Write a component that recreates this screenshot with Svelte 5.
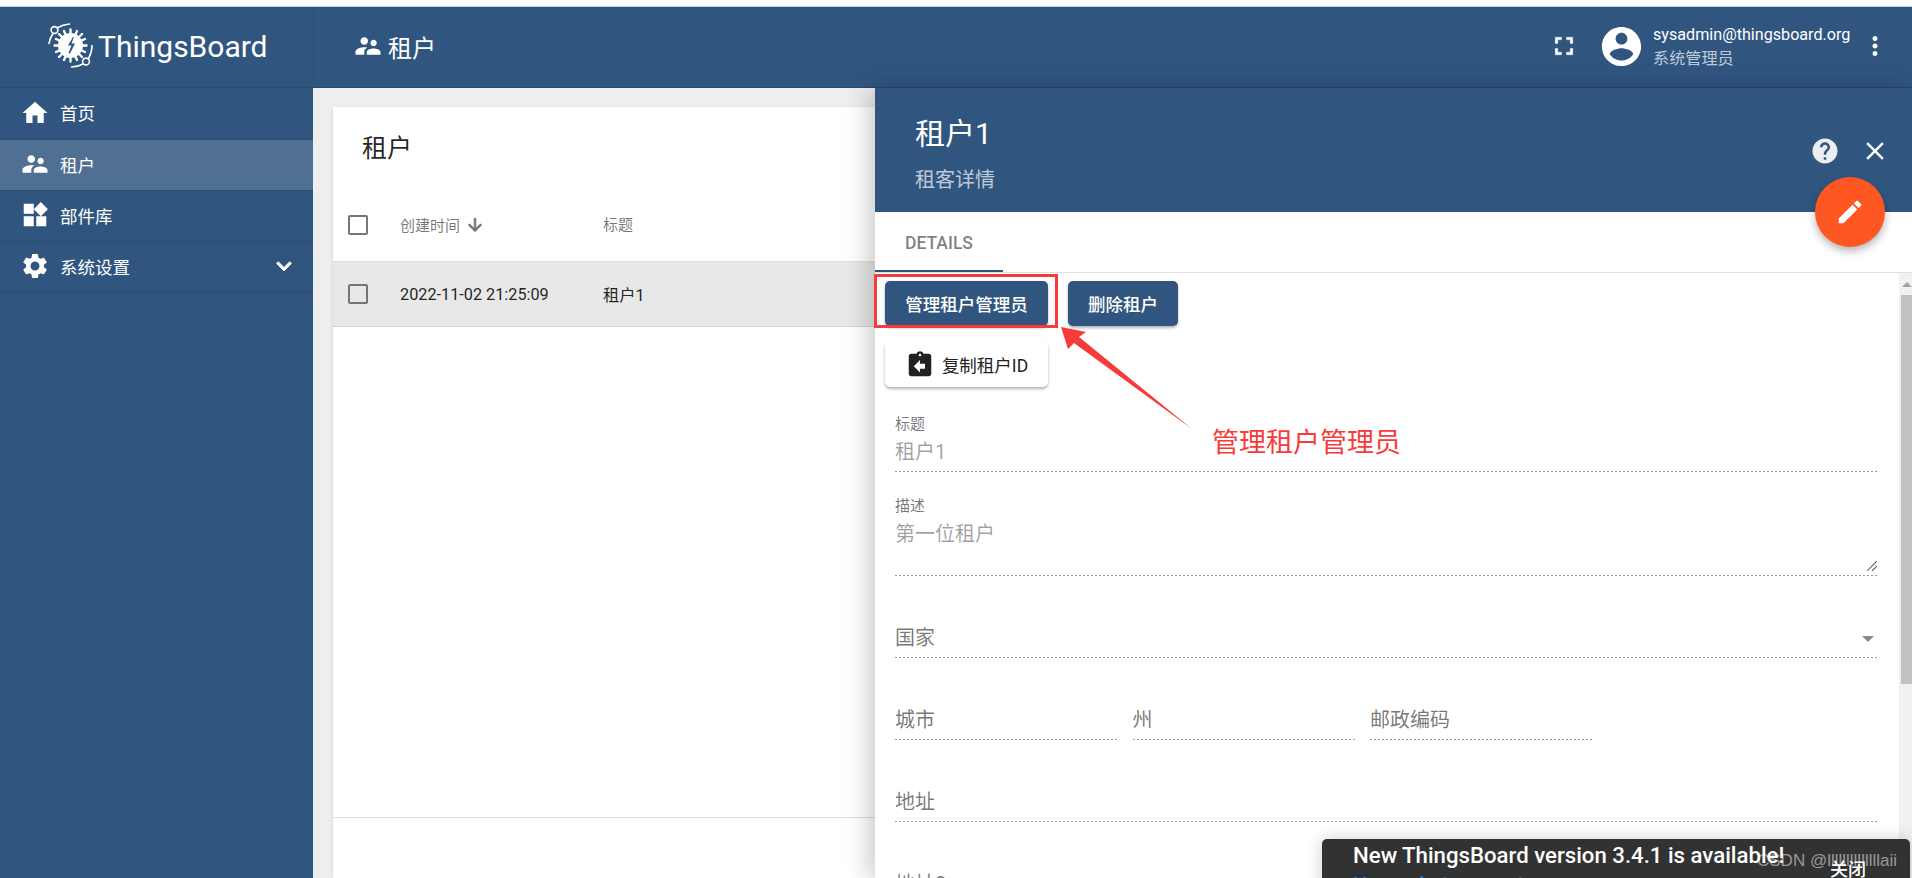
<script>
  const icons = {
    home: "M10 20v-6h4v6h5v-8h3L12 3 2 12h3v8z",
    people: "M16.5 12c1.38 0 2.49-1.12 2.49-2.5S17.88 7 16.5 7C15.12 7 14 8.12 14 9.5s1.12 2.5 2.5 2.5zM9 11c1.66 0 2.99-1.34 2.99-3S10.66 5 9 5C7.34 5 6 6.34 6 8s1.34 3 3 3zm7.5 3c-1.83 0-5.5.92-5.5 2.75V19h11v-2.25c0-1.83-3.67-2.75-5.5-2.75zM9 13c-2.33 0-7 1.17-7 3.5V19h7v-2.25c0-.85.33-2.34 2.37-3.47C10.5 13.1 9.66 13 9 13z",
    widgets: "M13 13v8h8v-8h-8zM3 21h8v-8H3v8zM3 3v8h8V3H3zm13.66-1.31L11 7.34 16.66 13l5.66-5.66-5.66-5.65z",
    settings: "M19.14 12.94c.04-.3.06-.61.06-.94 0-.32-.02-.64-.07-.94l2.03-1.58c.18-.14.23-.41.12-.61l-1.92-3.32c-.12-.22-.37-.29-.59-.22l-2.39.96c-.5-.38-1.03-.7-1.62-.94L14.4 2.81c-.04-.24-.24-.41-.48-.41h-3.84c-.24 0-.43.17-.47.41L9.25 5.35c-.59.24-1.13.57-1.62.94l-2.39-.96c-.22-.08-.47 0-.59.22L2.74 8.87c-.12.21-.08.47.12.61l2.03 1.58c-.05.3-.09.63-.09.94s.02.64.07.94l-2.03 1.58c-.18.14-.23.41-.12.61l1.92 3.32c.12.22.37.29.59.22l2.39-.96c.5.38 1.03.7 1.62.94l.36 2.54c.05.24.24.41.48.41h3.84c.24 0 .44-.17.47-.41l.36-2.54c.59-.24 1.13-.56 1.62-.94l2.39.96c.22.08.47 0 .59-.22l1.92-3.32c.12-.22.07-.47-.12-.61l-2.01-1.58zM12 15.6c-1.98 0-3.6-1.62-3.6-3.6s1.62-3.6 3.6-3.6 3.6 1.62 3.6 3.6-1.62 3.6-3.6 3.6z",
    chevron: "M16.59 8.59L12 13.17 7.41 8.59 6 10l6 6 6-6z",
    fullscreen: "M7 14H5v5h5v-2H7v-3zm-2-4h2V7h3V5H5v5zm12 7h-3v2h5v-5h-2v3zM14 5v2h3v3h2V5h-5z",
    account: "M12 2C6.48 2 2 6.48 2 12s4.48 10 10 10 10-4.48 10-10S17.52 2 12 2zm0 3c1.66 0 3 1.34 3 3s-1.34 3-3 3-3-1.34-3-3 1.34-3 3-3zm0 14.2c-2.5 0-4.71-1.28-6-3.22.03-1.99 4-3.08 6-3.08 1.99 0 5.97 1.09 6 3.08-1.29 1.94-3.5 3.22-6 3.22z",
    more: "M12 8c1.1 0 2-.9 2-2s-.9-2-2-2-2 .9-2 2 .9 2 2 2zm0 2c-1.1 0-2 .9-2 2s.9 2 2 2 2-.9 2-2-.9-2-2-2zm0 6c-1.1 0-2 .9-2 2s.9 2 2 2 2-.9 2-2-.9-2-2-2z",
    help: "M12 2C6.48 2 2 6.48 2 12s4.48 10 10 10 10-4.48 10-10S17.52 2 12 2zm1 17h-2v-2h2v2zm2.07-7.75l-.9.92C13.45 12.9 13 13.5 13 15h-2v-.5c0-1.1.45-2.1 1.17-2.83l1.24-1.26c.37-.36.59-.86.59-1.41 0-1.1-.9-2-2-2s-2 .9-2 2H8c0-2.21 1.79-4 4-4s4 1.79 4 4c0 .88-.36 1.68-.93 2.25z",
    close: "M19 6.41L17.59 5 12 10.59 6.41 5 5 6.41 10.59 12 5 17.59 6.41 19 12 13.41 17.59 19 19 17.59 13.41 12z",
    edit: "M3 17.25V21h3.75L17.81 9.94l-3.75-3.75L3 17.25zM20.71 7.04c.39-.39.39-1.02 0-1.41l-2.34-2.34c-.39-.39-1.02-.39-1.41 0l-1.83 1.83 3.75 3.75 1.83-1.83z",
    down: "M20 12l-1.41-1.41L13 16.17V4h-2v12.17l-5.58-5.59L4 12l8 8 8-8z",
    copy: "M19 3h-4.18C14.4 1.84 13.3 1 12 1c-1.3 0-2.4.84-2.82 2H5c-1.1 0-2 .9-2 2v14c0 1.1.9 2 2 2h14c1.1 0 2-.9 2-2V5c0-1.1-.9-2-2-2zm-7 0c.55 0 1 .45 1 1s-.45 1-1 1-1-.45-1-1 .45-1 1-1zm4 12h-4v3l-5-5 5-5v3h4v4z"
  };

  const menu = [
    { label: "首页", icon: "home" },
    { label: "租户", icon: "people", active: true },
    { label: "部件库", icon: "widgets" },
    { label: "系统设置", icon: "settings", more: true }
  ];
</script>

<div class="page">
  <div class="strip"></div>
  <div class="shell">
    <aside class="sidebar">
      <div class="logo">
        <svg class="logo-mark" viewBox="0 0 46 46" width="46" height="46">
          <g fill="none" stroke="#fff" stroke-width="1.6" stroke-linecap="round">
            <circle cx="6.5" cy="7" r="3.4" />
            <path d="M9.5 4.8C13 2.6 17 1.4 21.5 1" />
            <path d="M5 10.5C2.8 13.5 1.6 16.5 1 20.5" />
            <circle cx="38" cy="38.5" r="3.4" />
            <path d="M40.5 35.5C43 31 44 27 44 22.5" />
            <path d="M35 41C31.5 43 28 44 23.5 44" />
          </g>
          <g stroke="#fff" stroke-width="2.4" stroke-linecap="round">
            <path d="M22.5 6.5v32M6.500 22.5h32M11 11l23 23M34 11L11 34M16 8l13 29M29 8L16 37M8 16l29 13M8 29l29-13" />
          </g>
          <circle cx="22.5" cy="22.5" r="12.5" fill="#fff" />
          <path d="M25 14L20 22.500h3.500l-3 7.500 1.500.5 5-10h-3.500l2.500-6.500z" fill="#305680" />
        </svg>
        <span class="logo-text">ThingsBoard</span>
      </div>
      <nav>
        {#each menu as item}
          <div class="menu-item" class:active={item.active}>
            <svg class="icon" viewBox="0 0 24 24"><path d={icons[item.icon]} /></svg>
            <span>{item.label}</span>
            {#if item.more}
              <svg class="icon chevron" viewBox="0 0 24 24"><path d={icons.chevron} /></svg>
            {/if}
          </div>
        {/each}
      </nav>
    </aside>

    <div class="main">
      <header class="toolbar">
        <svg class="icon" viewBox="0 0 24 24"><path d={icons.people} /></svg>
        <span class="toolbar-title">租户</span>
        <div class="toolbar-right">
          <svg class="icon fullscreen" viewBox="0 0 24 24"><path d={icons.fullscreen} /></svg>
          <svg class="avatar" viewBox="0 0 24 24"><path d={icons.account} /></svg>
          <div class="user">
            <div class="email">sysadmin@thingsboard.org</div>
            <div class="role">系统管理员</div>
          </div>
          <svg class="icon" viewBox="0 0 24 24"><path d={icons.more} /></svg>
        </div>
      </header>

      <div class="content">
        <section class="card">
          <h2 class="card-title">租户</h2>
          <div class="row head">
            <span class="check"></span>
            <span class="sort">创建时间
              <svg viewBox="0 0 24 24"><path d={icons.down} /></svg>
            </span>
            <span class="head-label">标题</span>
          </div>
          <div class="row selected">
            <span class="check"></span>
            <span>2022-11-02 21:25:09</span>
            <span>租户1</span>
          </div>
          <div class="spacer"></div>
          <div class="card-footer"></div>
        </section>

        <section class="panel">
          <header class="panel-head">
            <div class="panel-titles">
              <h1>租户1</h1>
              <p>租客详情</p>
            </div>
            <div class="panel-actions">
              <svg class="icon help" viewBox="0 0 24 24"><path d={icons.help} /></svg>
              <svg class="icon" viewBox="0 0 24 24"><path d={icons.close} /></svg>
            </div>
          </header>
          <button class="fab" aria-label="edit">
            <svg viewBox="0 0 24 24"><path d={icons.edit} /></svg>
          </button>
          <div class="tabs">
            <div class="tab">DETAILS</div>
          </div>
          <div class="panel-body">
            <div class="form">
              <div class="actions">
                <button class="btn primary wide">管理租户管理员</button>
                <button class="btn primary">删除租户</button>
                <button class="btn plain wide">
                  <svg viewBox="0 0 24 24"><path d={icons.copy} /></svg>
                  复制租户ID
                </button>
              </div>

              <div class="field">
                <div class="label">标题</div>
                <div class="value">租户1</div>
              </div>
              <div class="field area">
                <div class="label">描述</div>
                <div class="value">第一位租户</div>
                <svg class="grip" viewBox="0 0 10 10"><path d="M0 10L10 0M5 10l5-5" /></svg>
              </div>
              <div class="field empty">
                <div class="value hint">国家</div>
                <span class="caret"></span>
              </div>
              <div class="triple">
                <div class="field empty"><div class="value hint">城市</div></div>
                <div class="field empty"><div class="value hint">州</div></div>
                <div class="field empty"><div class="value hint">邮政编码</div></div>
              </div>
              <div class="field empty"><div class="value hint">地址</div></div>
              <div class="field empty"><div class="value hint">地址2</div></div>
            </div>
            <div class="scrollbar">
              <div class="scroll-btn"></div>
              <div class="thumb"></div>
            </div>
          </div>
        </section>
      </div>
    </div>
  </div>

  <div class="toast">
    <div class="toast-text">
      <div>New ThingsBoard version 3.4.1 is available!</div>
      <div class="toast-link">Upgrade instructions</div>
    </div>
    <span class="toast-close">关闭</span>
  </div>

  <!-- annotations drawn on top of the screenshot -->
  <div class="mark-box"></div>
  <svg class="mark-arrow" width="1912" height="878">
    <polygon points="1061,327 1086,332 1079,337 1192,429 1074,343 1068,349" fill="#f73a3a" />
  </svg>
  <div class="mark-text">管理租户管理员</div>
  <div class="watermark">CSDN @llllllllllllllaii</div>
</div>

<style>
  :global(body) {
    margin: 0;
    background: #fff;
  }

  .page {
    position: relative;
    width: 1912px;
    height: 878px;
    overflow: hidden;
    font-family: Roboto, "Noto Sans CJK SC", sans-serif;
    color: rgba(0, 0, 0, 0.87);
  }

  .strip {
    height: 6px;
    border-bottom: 1px solid #ccc;
  }

  .shell {
    display: flex;
    height: 871px;
  }

  svg {
    display: block;
    flex: none;
  }

  .icon {
    width: 30px;
    height: 30px;
    fill: #fff;
  }

  /* sidebar */
  .sidebar {
    width: 313px;
    flex: none;
    background: #305680;
    color: #fff;
  }

  .logo {
    display: flex;
    align-items: center;
    gap: 4px;
    height: 81px;
    padding: 0 0 2px 48px;
    box-sizing: border-box;
    border-bottom: 1px solid #2a4d74;
  }

  .logo-text {
    font-size: 30px;
  }

  .menu-item {
    display: flex;
    align-items: center;
    gap: 10px;
    height: 51px;
    padding: 0 14px 2px 20px;
    box-sizing: border-box;
    border-bottom: 1px solid #2a4d74;
    font-size: 17.5px;
  }

  .menu-item:first-child {
    height: 52px;
  }

  .menu-item.active {
    background: #4f6f93;
  }

  .chevron {
    margin-left: auto;
    stroke: #fff;
    stroke-width: 0.7;
  }

  /* toolbar */
  .main {
    flex: 1;
    min-width: 0;
    display: flex;
    flex-direction: column;
  }

  .toolbar {
    display: flex;
    align-items: center;
    height: 81px;
    flex: none;
    box-sizing: border-box;
    padding: 0 22px 2px 40px;
    background: #305680;
    color: #fff;
    border-bottom: 1px solid #27496e;
    box-shadow: inset 1px 0 0 #2c5079;
  }

  .toolbar-title {
    margin-left: 5px;
    font-size: 24px;
  }

  .toolbar-right {
    margin-left: auto;
    display: flex;
    align-items: center;
  }

  .fullscreen {
    margin-right: 19px;
    stroke: #fff;
    stroke-width: 0.3;
  }

  .avatar {
    width: 47px;
    height: 47px;
    fill: #fff;
    margin-right: 8px;
  }

  .user {
    width: 207px;
    margin-top: 2px;
    font-size: 16.15px;
    line-height: 24px;
  }

  .role {
    color: rgba(255, 255, 255, 0.7);
  }

  /* tenants table */
  .content {
    position: relative;
    flex: 1;
    min-height: 0;
    background: #eee;
    padding: 19px 0 0 20px;
    display: flex;
  }

  .card {
    flex: 1;
    display: flex;
    flex-direction: column;
    background: #fff;
    box-shadow: 0 1px 3px rgba(0, 0, 0, 0.15);
  }

  .card-title {
    margin: 0;
    height: 82px;
    padding: 1px 0 0 29px;
    font-size: 25px;
    font-weight: 400;
    line-height: 82px;
    box-sizing: border-box;
  }

  .row {
    display: grid;
    grid-template-columns: 52px 203px 1fr;
    align-items: center;
    padding-left: 15px;
    box-sizing: border-box;
  }

  .head {
    height: 72px;
    font-size: 15px;
    color: rgba(0, 0, 0, 0.54);
  }

  .head-label {
    padding-bottom: 3px;
  }

  .selected {
    height: 66px;
    background: #e8e8e8;
    border-top: 1px solid #dfdfdf;
    border-bottom: 1px solid #d4d4d4;
    font-size: 16.25px;
  }

  .check {
    width: 20px;
    height: 20px;
    box-sizing: border-box;
    border: 2.5px solid #757575;
    border-radius: 2px;
  }

  .sort {
    display: flex;
    align-items: center;
    gap: 5px;
    padding-bottom: 2px;
  }

  .sort svg {
    width: 20px;
    height: 20px;
    fill: #757575;
    stroke: #757575;
    stroke-width: 1;
    margin-top: 2px;
  }

  .spacer {
    flex: 1;
  }

  .card-footer {
    height: 60px;
    border-top: 1px solid #e0e0e0;
  }

  /* details panel */
  .panel {
    position: absolute;
    top: 0;
    right: 0;
    bottom: 0;
    width: 1037px;
    display: flex;
    flex-direction: column;
    background: #fff;
    box-shadow: -6px 0 24px rgba(0, 0, 0, 0.22);
  }

  .panel-head {
    display: flex;
    justify-content: space-between;
    height: 124px;
    flex: none;
    box-sizing: border-box;
    padding: 26px 22px 0 40px;
    background: #305680;
    color: #fff;
  }

  .panel-head h1 {
    margin: 0;
    font-size: 30px;
    font-weight: 400;
    line-height: 40px;
  }

  .panel-head p {
    margin: 12px 0 0;
    font-size: 20px;
    line-height: 28px;
    color: rgba(255, 255, 255, 0.7);
  }

  .panel-actions {
    display: flex;
    gap: 20px;
    padding-top: 22px;
  }

  .help {
    opacity: 0.9;
  }

  .fab {
    position: absolute;
    top: 89px;
    right: 27px;
    width: 70px;
    height: 70px;
    padding: 20px;
    border: none;
    border-radius: 50%;
    background: #ff5722;
    box-shadow: 0 4px 8px rgba(0, 0, 0, 0.3);
  }

  .fab svg {
    width: 30px;
    height: 30px;
    fill: #fff;
  }

  .tabs {
    height: 61px;
    flex: none;
    box-sizing: border-box;
    border-bottom: 1px solid #e0e0e0;
  }

  .tab {
    width: 128px;
    height: 60px;
    box-sizing: border-box;
    padding-top: 2px;
    border-bottom: 2.5px solid #305680;
    text-align: center;
    line-height: 58px;
    font-size: 17.5px;
    font-weight: 500;
    color: rgba(0, 0, 0, 0.5);
  }

  .panel-body {
    flex: 1;
    min-height: 0;
    display: flex;
  }

  .form {
    flex: 1;
    min-width: 0;
    padding: 8px 22px 0 20px;
  }

  .actions {
    display: flex;
    flex-wrap: wrap;
    gap: 15px 20px;
    width: 320px;
    margin-left: -10px;
    margin-bottom: 3px;
  }

  .btn {
    display: flex;
    align-items: center;
    justify-content: center;
    gap: 7px;
    height: 45px;
    padding: 0 20px;
    box-sizing: border-box;
    border: none;
    border-radius: 5px;
    font-family: inherit;
    font-size: 17.5px;
    font-weight: 500;
    box-shadow: 0 2px 3px rgba(0, 0, 0, 0.3);
  }

  .btn.wide {
    width: 163px;
  }

  .primary {
    background: #305680;
    color: #fff;
  }

  .plain {
    height: 46px;
    background: #fff;
    color: #222;
    padding: 0;
    font-weight: 400;
  }

  .plain svg {
    width: 30px;
    height: 30px;
    fill: #222;
    margin-top: 1px;
  }

  .field {
    position: relative;
    display: flex;
    flex-direction: column;
    height: 82px;
    box-sizing: border-box;
    padding-top: 24px;
    background: linear-gradient(to right, #999 50%, transparent 50%) left bottom / 4px 1px repeat-x;
  }

  .field.area {
    height: 104px;
  }

  .field.empty {
    justify-content: flex-end;
    padding-bottom: 6px;
  }

  .label {
    font-size: 15px;
    line-height: 20px;
    margin-bottom: 4px;
    color: rgba(0, 0, 0, 0.54);
  }

  .value {
    font-size: 20px;
    line-height: 28px;
    color: rgba(0, 0, 0, 0.38);
  }

  .hint {
    color: rgba(0, 0, 0, 0.54);
  }

  .grip {
    position: absolute;
    right: 0;
    bottom: 5px;
    width: 10px;
    height: 10px;
    fill: none;
    stroke: #666;
    stroke-width: 1.2;
  }

  .caret {
    position: absolute;
    right: 3px;
    bottom: 16px;
    border-left: 6px solid transparent;
    border-right: 6px solid transparent;
    border-top: 6px solid #8a8a8a;
  }

  .triple {
    display: grid;
    grid-template-columns: repeat(3, 222px);
    gap: 15.5px;
  }

  /* fake scrollbar */
  .scrollbar {
    width: 13px;
    flex: none;
    background: #f1f1f1;
  }

  .scroll-btn {
    height: 22px;
    position: relative;
  }

  .scroll-btn::after {
    content: "";
    position: absolute;
    top: 9px;
    right: 0;
    border-left: 5px solid transparent;
    border-right: 5px solid transparent;
    border-bottom: 5px solid #a3a3a3;
  }

  .thumb {
    height: 389px;
    margin-left: 2px;
    background: #c1c1c1;
  }

  /* update snackbar */
  .toast {
    position: absolute;
    left: 1322px;
    top: 839px;
    width: 588px;
    height: 60px;
    display: flex;
    background: #323232;
    border-radius: 5px;
    box-shadow: 0 0 16px rgba(0, 0, 0, 0.2);
    color: #fff;
  }

  .toast-text {
    padding: 1px 0 0 31px;
    font-size: 22.2px;
    font-weight: 500;
    line-height: 30px;
    white-space: nowrap;
  }

  .toast-link {
    color: #1976d2;
  }

  .toast-close {
    position: absolute;
    left: 508px;
    top: 21px;
    font-size: 18px;
    line-height: 20px;
    font-weight: 500;
  }

  /* annotations */
  .mark-box {
    position: absolute;
    left: 874px;
    top: 274px;
    width: 184px;
    height: 54px;
    box-sizing: border-box;
    border: 3px solid #f73a3a;
  }

  .mark-arrow {
    position: absolute;
    left: 0;
    top: 0;
    pointer-events: none;
  }

  .mark-text {
    position: absolute;
    left: 1212px;
    top: 425px;
    font-size: 27px;
    line-height: 36px;
    color: #f73a3a;
  }

  .watermark {
    position: absolute;
    left: 1757px;
    top: 850px;
    font-family: "Liberation Sans", sans-serif;
    font-size: 17px;
    line-height: 22px;
    color: rgba(255, 255, 255, 0.5);
  }
</style>
